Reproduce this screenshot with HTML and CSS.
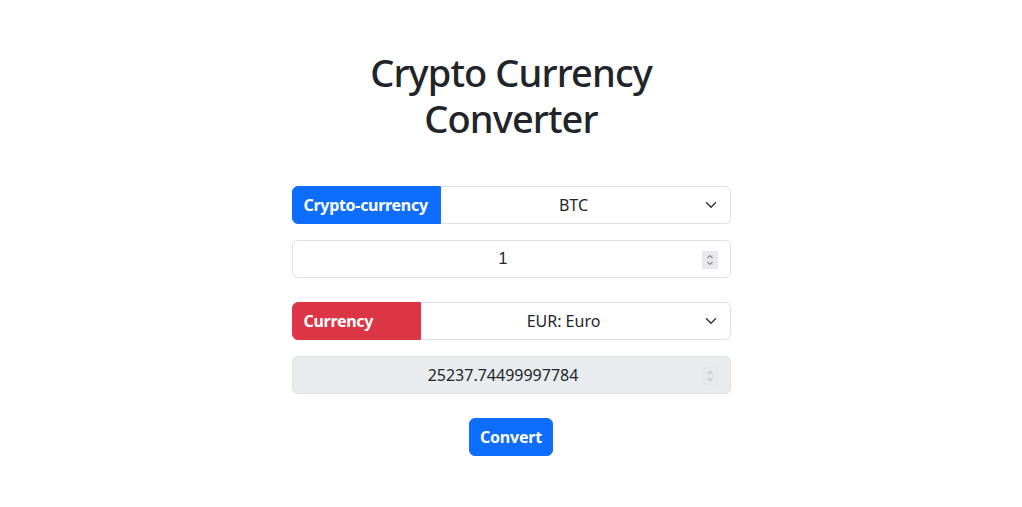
FILE: index.html
```html
<!DOCTYPE html>
<html lang="en">
<head>
<meta charset="utf-8">
<title>Crypto Currency Converter</title>
<link rel="stylesheet" href="styles.css">
</head>
<body>
<main class="wrap">
  <h1 class="title">Crypto Currency Converter</h1>
  <form class="form">
    <div class="group">
      <span class="tag tag-blue">Crypto-currency</span>
      <div class="select">
        <span class="val">BTC</span>
        <svg class="chev" width="16" height="12" viewBox="0 0 16 16"><path d="m2 5 6 6 6-6" fill="none" stroke="#343a40" stroke-width="2" stroke-linecap="round" stroke-linejoin="round"/></svg>
      </div>
    </div>
    <div class="field">
      <span class="val num">1</span>
      <svg class="spin" width="16" height="18" viewBox="0 0 16 18"><rect width="16" height="18" fill="#e9e9ed"/><path d="M5.5 7 8 4.5 10.5 7M5.5 11 8 13.5 10.5 11" fill="none" stroke="#8a8a90" stroke-width="1.1"/></svg>
    </div>
    <div class="group group-gap">
      <span class="tag tag-red">Currency</span>
      <div class="select">
        <span class="val">EUR: Euro</span>
        <svg class="chev" width="16" height="12" viewBox="0 0 16 16"><path d="m2 5 6 6 6-6" fill="none" stroke="#343a40" stroke-width="2" stroke-linecap="round" stroke-linejoin="round"/></svg>
      </div>
    </div>
    <div class="field field-ro">
      <span class="val">25237.74499997784</span>
      <svg class="spin" width="16" height="18" viewBox="0 0 16 18"><rect width="16" height="18" fill="#e6e8ec"/><path d="M5.5 7 8 4.5 10.5 7M5.5 11 8 13.5 10.5 11" fill="none" stroke="#c4c6cb" stroke-width="1.1"/></svg>
    </div>
    <div class="actions">
      <button type="button" class="btn">Convert</button>
    </div>
  </form>
</main>
</body>
</html>
```
FILE: styles.css
```css
* { box-sizing: border-box; }
html, body { margin: 0; padding: 0; background: #fff; }
body {
  font-family: "Noto Sans", "DejaVu Sans", sans-serif;
  color: #212529;
  font-size: 16px;
}
.wrap {
  width: 439px;
  margin: 0 auto;
  padding-top: 50px;
}
.title {
  margin: 0 0 45px;
  font-size: 38px;
  line-height: 45.6px;
  letter-spacing: -0.9px;
  font-weight: 500;
  text-align: center;
  color: #212529;
}
.form { display: flex; flex-direction: column; }
.group {
  display: flex;
  height: 38px;
}
.group-gap { margin-top: 24px; }
.tag {
  flex-shrink: 0;
  display: flex;
  align-items: center;
  padding: 0 11px;
  color: #fff;
  font-weight: 700;
  font-size: 16px;
  letter-spacing: -0.3px;
  white-space: nowrap;
  border-radius: 6px 0 0 6px;
}
.tag-blue { background: #0d6efd; border: 1px solid #0d6efd; width: 149px; }
.tag-red { background: #dc3545; border: 1px solid #dc3545; width: 129px; }
.select {
  flex: 1;
  display: flex;
  align-items: center;
  border: 1px solid #dee2e6;
  border-left: none;
  border-radius: 0 6px 6px 0;
  padding: 0 11px 0 12px;
}
.select .val { flex: 1; text-align: center; margin-right: 8px; }
.chev { display: block; }
.field {
  margin-top: 16px;
  height: 38px;
  display: flex;
  align-items: center;
  border: 1px solid #dee2e6;
  border-radius: 6px;
  padding: 0 12px;
}
.field .val { flex: 1; text-align: center; }
.num { font-family: "Liberation Sans", Arial, sans-serif; }
.field-ro { background: #e9ecef; }
.spin { display: block; margin-top: 1px; }
.actions {
  margin-top: 24px;
  display: flex;
  justify-content: center;
}
.btn {
  height: 38px;
  padding: 0 10px;
  border: 1px solid #0d6efd;
  background: #0d6efd;
  color: #fff;
  font-family: "Noto Sans", "DejaVu Sans", sans-serif;
  font-weight: 700;
  font-size: 16px;
  letter-spacing: -0.2px;
  border-radius: 6px;
}
```
